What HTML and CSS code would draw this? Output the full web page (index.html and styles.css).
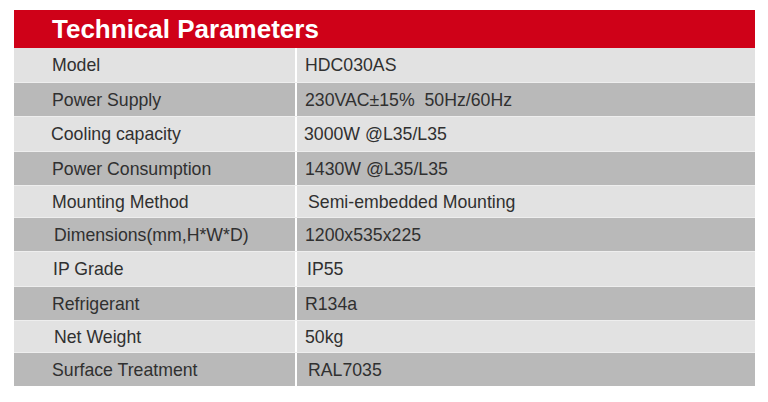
FILE: index.html
```html
<!DOCTYPE html>
<html>
<head>
<meta charset="utf-8">
<link rel="stylesheet" href="styles.css">
</head>
<body>
<div class="sheet">
  <div class="title">Technical Parameters</div>
  <div class="table">
    <div class="row light"><div class="k">Model</div><div class="v">HDC030AS</div></div>
    <div class="row dark"><div class="k">Power Supply</div><div class="v">230VAC±15%&nbsp; 50Hz/60Hz</div></div>
    <div class="row light"><div class="k k-cool">Cooling capacity</div><div class="v v-cool">3000W @L35/L35</div></div>
    <div class="row dark"><div class="k">Power Consumption</div><div class="v">1430W @L35/L35</div></div>
    <div class="row light short"><div class="k">Mounting Method</div><div class="v v-mount">Semi-embedded Mounting</div></div>
    <div class="row dark"><div class="k k-dim">Dimensions(mm,H*W*D)</div><div class="v">1200x535x225</div></div>
    <div class="row light"><div class="k k-ip">IP Grade</div><div class="v v-ip">IP55</div></div>
    <div class="row dark"><div class="k">Refrigerant</div><div class="v">R134a</div></div>
    <div class="row light short"><div class="k k-dim">Net Weight</div><div class="v">50kg</div></div>
    <div class="row dark"><div class="k">Surface Treatment</div><div class="v v-ral">RAL7035</div></div>
  </div>
</div>
</body>
</html>
```
FILE: styles.css
```css
html, body {
  margin: 0;
  padding: 0;
  background: #ffffff;
}
body {
  font-family: "Liberation Sans", Arial, sans-serif;
}
.sheet {
  margin: 10px 13px 0 14px;
  width: 741px;
}
.title {
  height: 38px;
  background: #cf0118;
  color: #ffffff;
  font-weight: bold;
  font-size: 26px;
  line-height: 38px;
  padding-left: 38px;
}
.table {
  display: flex;
  flex-direction: column;
  row-gap: 1px;
  background: #eeeeee;
}
.row {
  display: grid;
  grid-template-columns: 281px 458px;
  column-gap: 2px;
  height: 33.5px;
  background: #ffffff;
}
.row.short {
  height: 30.5px;
}
.k, .v {
  display: flex;
  align-items: center;
  padding-top: 2px;
  box-sizing: border-box;
  font-size: 17.7px;
  color: #303030;
}
.light .k, .light .v {
  background: #e2e2e2;
}
.dark .k, .dark .v {
  background: #b9b9b9;
}
.k {
  padding-left: 38px;
}
.v {
  padding-left: 8px;
}
.k-cool { padding-left: 37px; }
.k-dim { padding-left: 40px; }
.k-ip { padding-left: 39px; }
.v-cool { padding-left: 7px; }
.v-mount { padding-left: 11px; }
.v-ip { padding-left: 10px; }
.v-ral { padding-left: 11px; }
```
